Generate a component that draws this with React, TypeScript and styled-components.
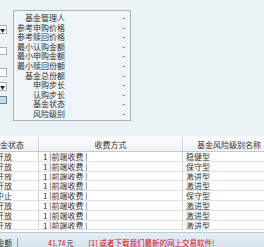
import React from 'react';
import styled, { createGlobalStyle } from 'styled-components';

const GlobalStyle = createGlobalStyle`
  html, body {
    margin: 0;
    padding: 0;
    width: 264px;
    height: 247px;
    overflow: hidden;
    background: #ffffff;
  }
  body {
    font-family: "Noto Sans CJK SC", "DejaVu Sans", sans-serif;
    font-size: 8px;
    color: #333;
  }
`;

const Page = styled.div`
  width: 264px;
  height: 247px;
  display: flex;
  flex-direction: column;
  overflow: hidden;
`;

const TopPanel = styled.div`
  height: 138px;
  flex: 0 0 138px;
  background: #ebf2f6;
  display: flex;
  border-bottom: 2px solid #f6f9fb;
  box-sizing: border-box;
`;

const Controls = styled.div`
  width: 13px;
  flex: 0 0 13px;
  position: relative;
`;

const Control = styled.div<{ $top: number; $h: number; $kind: 'select' | 'input' | 'button' }>`
  position: absolute;
  left: -20px;
  top: ${(p) => p.$top}px;
  width: 27px;
  height: ${(p) => p.$h}px;
  box-sizing: border-box;
  border: 1px solid ${(p) => (p.$kind === 'button' ? '#6b7f93' : '#a7b3bf')};
  background: ${(p) => (p.$kind === 'button' ? '#c9d9ea' : '#ffffff')};
  display: flex;
  align-items: center;
  justify-content: flex-end;
  padding-right: 1px;
  font-size: 5px;
  color: #222;
`;

const InfoBox = styled.div`
  margin-top: 10px;
  width: 118px;
  height: 111px;
  box-sizing: border-box;
  border: 1px solid #a9b2bb;
  background: #eef4f8;
  padding: 2px 5px 0 0;
`;

const InfoRow = styled.div`
  display: flex;
  height: 9.6px;
  line-height: 9.6px;
  white-space: nowrap;
`;

const InfoLabel = styled.div`
  width: 51px;
  text-align: right;
  color: #333;
`;

const InfoValue = styled.div`
  flex: 1;
  text-align: right;
`;

const TableArea = styled.div`
  height: 94px;
  flex: 0 0 94px;
  background: #ffffff;
  overflow: hidden;
`;

const Row = styled.div<{ $head?: boolean }>`
  display: grid;
  grid-template-columns: 39px 144px 1fr;
  height: ${(p) => (p.$head ? '14px' : '9.8px')};
  line-height: ${(p) => (p.$head ? '14px' : '9.8px')};
  background: ${(p) => (p.$head ? 'linear-gradient(#fbfcfd, #eef1f4)' : '#ffffff')};
  border-bottom: 1px solid ${(p) => (p.$head ? '#c3cad1' : '#dde1e5')};
  box-sizing: border-box;
  white-space: nowrap;
`;

const Cell = styled.div<{ $align?: 'left' | 'center'; $shift?: number; $pad?: number }>`
  border-right: 1px solid #cfd5db;
  overflow: hidden;
  text-align: ${(p) => p.$align || 'left'};
  padding-left: ${(p) => p.$pad || 0}px;
  text-indent: ${(p) => p.$shift || 0}px;
  &:last-child {
    border-right: none;
  }
`;

const BottomBar = styled.div`
  flex: 1;
  background: linear-gradient(#e6eef5, #d2e0ec);
  border-top: 1px solid #b9cadb;
  display: flex;
  align-items: flex-start;
  padding-top: 5px;
  white-space: nowrap;
  line-height: 10px;
  font-size: 7.5px;
`;

const BarLabel = styled.div`
  width: 17px;
  text-indent: -3px;
  overflow: hidden;
  border-right: 1px solid #8ea3b8;
  height: 10px;
`;

const Amount = styled.span`
  margin-left: 30px;
  color: #d01010;
  font-size: 7px;
`;

const Unit = styled.span`
  color: #333;
  margin-left: 1px;
`;

const Notice = styled.span`
  margin-left: 15px;
  color: #d01010;
`;

const infoRows: [string, string][] = [
  ['基金管理人', '-'],
  ['参考申购价格', '-'],
  ['参考赎回价格', '-'],
  ['最小认购金额', '-'],
  ['最小申购金额', '-'],
  ['最小赎回份额', '-'],
  ['基金总份额', '-'],
  ['申购步长', '-'],
  ['认购步长', '-'],
  ['基金状态', '-'],
  ['风险级别', '-'],
];

const funds = [
  { status: '开放', risk: '稳健型' },
  { status: '开放', risk: '保守型' },
  { status: '开放', risk: '激进型' },
  { status: '开放', risk: '激进型' },
  { status: '中止', risk: '保守型' },
  { status: '开放', risk: '激进型' },
  { status: '开放', risk: '激进型' },
  { status: '开放', risk: '激进型' },
];

export default function App() {
  return (
    <Page>
      <GlobalStyle />
      <TopPanel>
        <Controls>
          <Control $top={25} $h={9} $kind="select">▼</Control>
          <Control $top={47} $h={8} $kind="input" />
          <Control $top={68} $h={9} $kind="input" />
          <Control $top={82} $h={9} $kind="select">▼</Control>
          <Control $top={96} $h={8} $kind="button" />
        </Controls>
        <InfoBox>
          {infoRows.map(([label, value]) => (
            <InfoRow key={label}>
              <InfoLabel>{label}</InfoLabel>
              <InfoValue>{value}</InfoValue>
            </InfoRow>
          ))}
        </InfoBox>
      </TopPanel>
      <TableArea>
        <Row $head>
          <Cell $shift={-8}>基金状态</Cell>
          <Cell $align="center">收费方式</Cell>
          <Cell $pad={14}>基金风险级别名称</Cell>
        </Row>
        {funds.map((f, i) => (
          <Row key={i}>
            <Cell $shift={-4}>{f.status}</Cell>
            <Cell $pad={4}>1 |前端收费 |</Cell>
            <Cell $pad={3}>{f.risk}</Cell>
          </Row>
        ))}
      </TableArea>
      <BottomBar>
        <BarLabel>金额</BarLabel>
        <Amount>
          41.74<Unit>元</Unit>
        </Amount>
        <Notice>[1] 或者下载我们最新的网上交易软件!</Notice>
      </BottomBar>
    </Page>
  );
}
